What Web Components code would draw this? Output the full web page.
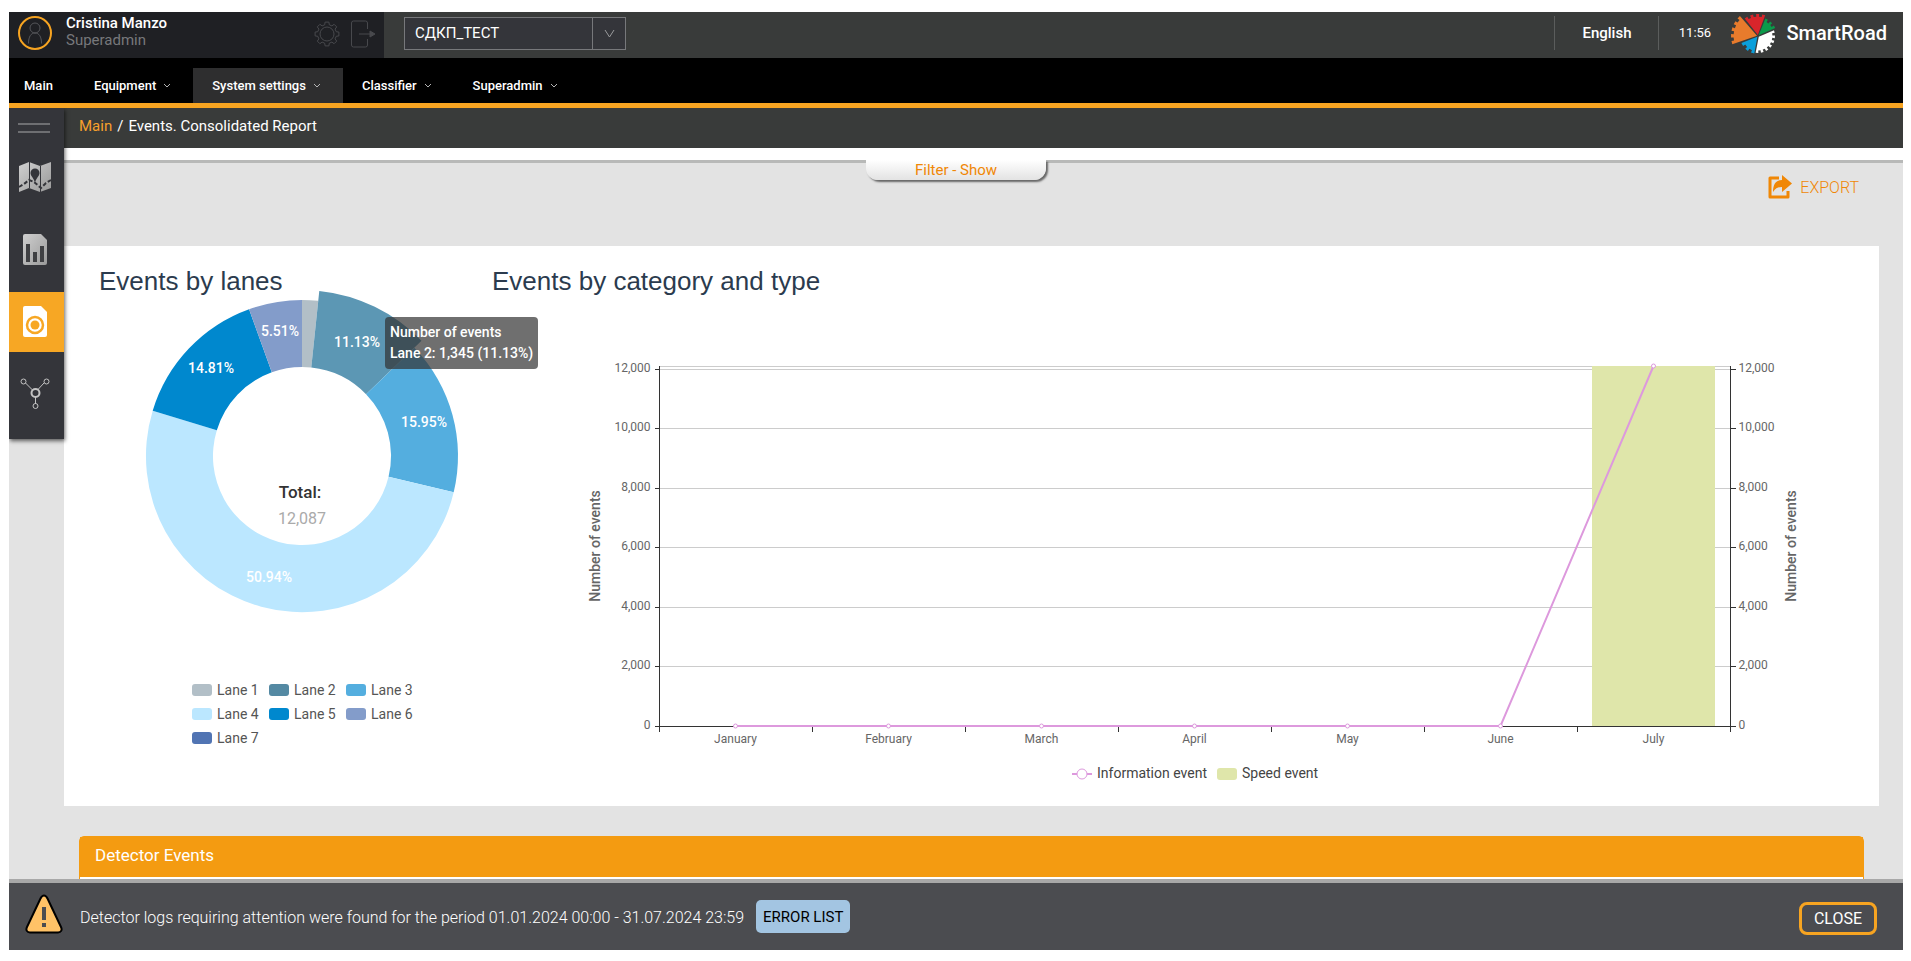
<!DOCTYPE html>
<html lang="en">
<head>
<meta charset="utf-8">
<title>SmartRoad – Events. Consolidated Report</title>
<style>
  html { background: #fff; }
  body { margin: 12px 8px 11px 9px; font-family: Roboto, "Liberation Sans", sans-serif; font-size: 14px; color: #fff; }
</style>
</head>
<body>
<sr-app></sr-app>

<script>
const define = (name, html, setup) => {
  const template = document.createElement('template');
  template.innerHTML = html;
  customElements.define(name, class extends HTMLElement {
    constructor() {
      super();
      this.attachShadow({ mode: 'open' }).append(template.content.cloneNode(true));
    }
    connectedCallback() { if (setup) setup(this, this.shadowRoot); }
  });
};

/* ---------- brand mark: five toothed gear sectors ---------- */
define('sr-logo', `
<style>
  :host { display: block; width: 48px; height: 44px; }
  svg { display: block; overflow: visible; }
</style>
<svg width="48" height="44" viewBox="0 0 48 44" aria-hidden="true"></svg>`, (host, root) => {
  const cx = 28, cy = 23;
  const sector = (from, to, r, teeth, color) => {
    const pt = (deg, rad) => {
      const a = deg * Math.PI / 180;
      return (cx + rad * Math.sin(a)).toFixed(2) + ',' + (cy - rad * Math.cos(a)).toFixed(2);
    };
    const step = (to - from) / (teeth * 2 - 1);
    const pts = [pt((from + to) / 2, 1)];
    for (let i = 0; i < teeth * 2 - 1; i++) {
      const rad = i % 2 ? r - 2.6 : r;
      pts.push(pt(from + i * step, rad), pt(from + (i + 1) * step, rad));
    }
    return `<polygon points="${pts.join(' ')}" fill="${color}"/>`;
  };
  root.querySelector('svg').innerHTML =
    sector(252, 318, 27, 5, '#e87b2c') + sector(-37, 19, 22, 4, '#d9252b') +
    sector(23, 65, 19, 3, '#0b9a4a') + sector(70, 188, 17, 7, '#fff') + sector(192, 247, 18, 3, '#0a9fdb');
});

/* ---------- top bar ---------- */
define('sr-topbar', `
<style>
  :host { display: flex; height: 46px; background: #393b3a; }
  .user { display: flex; width: 375px; box-sizing: border-box; padding: 0 8px 0 9px; background: #1f2024; align-items: center; }
  .avatar { margin-bottom: 4px; }
  .who { flex: 1; margin-left: 14px; padding-bottom: 6px; font-size: 15px; line-height: 17px; }
  .who b { display: block; font-weight: 500; }
  .who span { color: #77787b; }
  .user button { background: none; border: 0; padding: 0; margin: 0 0 2px 10px; display: block; height: 28px; }
  svg { display: block; }
  .pick { position: relative; align-self: center; margin-left: 20px; width: 222px; height: 33px; margin-bottom: 3px; }
  select { appearance: none; width: 100%; height: 100%; box-sizing: border-box; border: 1px solid #77787b; border-radius: 0;
    background: #34353a; color: #fff; font: 15px Roboto, "Liberation Sans", sans-serif; padding: 0 40px 2px 10px; }
  .arrow { position: absolute; right: 0; top: 1px; width: 34px; height: 31px; box-sizing: border-box; border-left: 1px solid #77787b;
    display: grid; place-items: center; pointer-events: none; }
  .right { margin-left: auto; display: flex; align-items: center; }
  .lang { border: solid #5b5d5c; border-width: 0 1px; height: 34px; width: 105px; box-sizing: border-box; margin-bottom: 4px;
    display: grid; place-items: center; color: #fff; text-decoration: none; font-size: 15px; font-weight: 500; }
  time { font-size: 13px; width: 71px; text-align: center; padding-bottom: 5px; box-sizing: border-box; }
  .brand { font-size: 20px; font-weight: 500; margin: 0 16px 4px 8px; }
</style>
<div class="user">
  <svg class="avatar" width="34" height="34" viewBox="0 0 34 34" aria-hidden="true">
    <circle cx="17" cy="17" r="16" fill="none" stroke="#f7a421" stroke-width="2"/>
    <g fill="none" stroke="#55565a"><circle cx="17" cy="12" r="5"/><path d="M10.500 27.500c0-7 2.500-10.500 6.500-10.500s6.500 3.500 6.500 10.500"/></g>
  </svg>
  <div class="who"><b>Cristina Manzo</b><span>Superadmin</span></div>
  <button type="button" aria-label="Settings"><svg width="26" height="26" viewBox="-13 -13 26 26" fill="none" stroke="#48494d"><circle r="7"/><path id="gear"/></svg></button>
  <button type="button" aria-label="Log out"><svg width="26" height="28" viewBox="0 0 26 28" fill="none" stroke="#48494d"><path d="M17.500 9V3a2 2 0 0 0-2-2h-12a2 2 0 0 0-2 2v22a2 2 0 0 0 2 2h12a2 2 0 0 0 2-2v-6M9 14h12"/><path d="M20 11l5 3-5 3z" fill="#48494d"/></svg></button>
</div>
<div class="pick">
  <select aria-label="Project"><option>СДКП_ТЕСТ</option></select>
  <span class="arrow"><svg width="11" height="9" viewBox="0 0 11 9" fill="none" stroke="#9a9b9d"><path d="M1 1l4.500 7L10 1"/></svg></span>
</div>
<div class="right">
  <a class="lang" href="#">English</a>
  <time>11:56</time>
  <sr-logo></sr-logo>
  <span class="brand">SmartRoad</span>
</div>`, (host, root) => {
  const pts = [];
  for (let i = 0; i < 8; i++) {
    const c = i * 45;
    [[-14, 9.5], [-9, 12], [9, 12], [14, 9.5]].forEach(([d, r]) => {
      const a = (c + d) * Math.PI / 180;
      pts.push((r * Math.sin(a)).toFixed(1) + ' ' + (-r * Math.cos(a)).toFixed(1));
    });
  }
  root.getElementById('gear').setAttribute('d', 'M' + pts.join('L') + 'Z');
});

/* ---------- main navigation ---------- */
define('sr-nav-item', `
<style>
  :host { display: block; }
  a { display: flex; align-items: center; height: 35px; padding: 0 22px 0 19px; color: #fff; text-decoration: none; font-size: 13px; font-weight: 500; }
  :host([active]) a { background: #2e2e2f; }
  svg { margin-left: 7px; }
  :host([plain]) svg { display: none; }
  :host([plain]) a { padding: 0 22px 0 15px; }
</style>
<a href="#"><slot></slot><svg width="8" height="6" viewBox="0 0 8 6" fill="none" stroke="#b5b5b5"><path d="M1 1l3 3 3-3"/></svg></a>`);

define('sr-nav', `
<style>
  :host { display: block; background: #000; border-bottom: 5px solid #f7a421; padding-top: 10px; }
  nav { display: flex; }
</style>
<nav>
  <sr-nav-item plain>Main</sr-nav-item>
  <sr-nav-item>Equipment</sr-nav-item>
  <sr-nav-item active>System settings</sr-nav-item>
  <sr-nav-item>Classifier</sr-nav-item>
  <sr-nav-item>Superadmin</sr-nav-item>
</nav>`);

/* ---------- sidebar ---------- */
define('sr-sidebar', `
<style>
  :host { display: block; background: #34353a; width: 55px; padding-bottom: 15px; box-shadow: 1px 2px 4px rgba(0,0,0,.6); }
  button { display: block; border: 0; background: none; padding: 0 0 0 9px; width: 100%; }
  .burger { height: 40px; }
  .item { box-sizing: border-box; height: 60px; margin-bottom: 12px; padding-bottom: 2px; }
  .item:last-child { margin-bottom: 0; }
  .item.on { background: #f7a724; }
  svg { display: block; }
</style>
<button type="button" class="burger" aria-label="Menu"><svg width="34" height="10"><path d="M0 0h32v2H0zM0 8h32v2H0z" fill="#6e6f72"/></svg></button>
<button type="button" class="item" aria-label="Map"><svg width="34" height="40" viewBox="0 -4 34 40">
  <defs><linearGradient id="g" x1="0" y1="0" x2="1" y2="1"><stop stop-color="#d0d0d0"/><stop offset="1" stop-color="#999"/></linearGradient></defs>
  <path d="M1 5L11 1l11 4L33 1v26l-11 4-11-4L1 31z" fill="url(#g)"/>
  <path d="M11.500 1v26M22.500 5v26" stroke="#34353a"/>
  <path d="M17 22c-1-5-4.500-7-4.500-10a4.500 4.500 0 0 1 9 0c0 3-3.500 5-4.500 10z" fill="#34353a"/>
  <path d="M1 26l5-3 5-4 5 2 7 6 5-5 5-3" fill="none" stroke="#34353a" stroke-width="2" stroke-dasharray="4 2"/></svg></button>
<button type="button" class="item" aria-label="Reports"><svg width="34" height="32" viewBox="0 0 34 32">
  <defs><linearGradient id="d" x1="0" y1="0" x2="1" y2="1"><stop stop-color="#cfcfcf"/><stop offset="1" stop-color="#9a9a9a"/></linearGradient></defs>
  <path d="M7 1h16l6 6v23a2 2 0 0 1-2 2H7a2 2 0 0 1-2-2V3a2 2 0 0 1 2-2z" fill="url(#d)"/>
  <path d="M8 11h4v18H8zM15 19h4v10h-4zM22 13h4v16h-4z" fill="#3f4043"/></svg></button>
<button type="button" class="item on" aria-label="Events"><svg width="34" height="32" viewBox="0 0 34 32">
  <path d="M7 1h16l6 6v23a2 2 0 0 1-2 2H7a2 2 0 0 1-2-2V3a2 2 0 0 1 2-2z" fill="#fff"/>
  <circle cx="17" cy="20" r="8" fill="none" stroke="#f7a724" stroke-width="2.500"/><circle cx="17" cy="20" r="4.500" fill="#f7a724"/></svg></button>
<button type="button" class="item" aria-label="Network"><svg width="34" height="32" viewBox="0 0 34 32" fill="none" stroke="#c4c4c4">
  <path d="M7.500 6l7 7M26 6l-6.500 7M17.500 19.500v7.500"/><circle cx="17.500" cy="16" r="4" stroke-width="2"/>
  <circle cx="5.500" cy="4.500" r="2.500"/><circle cx="28.500" cy="4.500" r="2.500"/><circle cx="17.500" cy="29" r="2.500"/></svg></button>`);

/* ---------- donut chart ---------- */
define('sr-donut', `
<style>
  :host { display: block; position: relative; }
  svg { display: block; overflow: visible; width: 100%; height: 382px; }
  text { text-anchor: middle; }
  .pct { font-size: 14px; font-weight: 500; fill: #fff; }
  ul { list-style: none; margin: 0 0 0 94px; padding: 0; display: grid; grid-template-columns: repeat(3, 77px); color: #555; font-size: 14px; line-height: 24px; }
  li { display: flex; align-items: center; }
  i { width: 20px; height: 12px; border-radius: 3px; margin-right: 5px; }
  .tip { position: absolute; left: 287px; top: 21px; background: rgba(50,50,50,.7); border-radius: 4px; padding: 5px; line-height: 21px;
    font-size: 14px; font-weight: 500; color: #fff; white-space: nowrap; }
</style>
<svg role="img" aria-label="Events by lanes"></svg>
<ul></ul>
<div class="tip">Number of events<br>Lane 2: 1,345 (11.13%)</div>`, (host, root) => {
  const lanes = [
    ['Lane 1', 1.66, '#b2bfc7'], ['Lane 2', 11.13, '#5489a3', '#5c97b4'], ['Lane 3', 15.95, '#54aedf'],
    ['Lane 4', 50.94, '#bbe7ff'], ['Lane 5', 14.81, '#0088ce'], ['Lane 6', 5.51, '#839cca'], ['Lane 7', 0, '#5174b3']];
  const cx = 204, cy = 160, inner = 89;
  const at = (share, r) => {
    const a = share / 100 * 2 * Math.PI;
    return [cx + r * Math.sin(a), cy - r * Math.cos(a)].map(v => v.toFixed(2));
  };
  let start = 0, arcs = '', labels = '';
  for (const [, share, color, hover] of lanes) {
    if (!share) continue;
    const outer = hover ? 166 : 156, end = start + share, big = share > 50 ? 1 : 0;
    arcs += `<path fill="${hover || color}" d="M${at(start, outer)}A${outer} ${outer} 0 ${big} 1 ${at(end, outer)}L${at(end, inner)}A${inner} ${inner} 0 ${big} 0 ${at(start, inner)}Z"/>`;
    if (share > 5) {
      const [x, y] = at((start + end) / 2, 126);
      labels += `<text class="pct" x="${Math.round(x)}" y="${Math.round(y) + 4}">${share.toFixed(2)}%</text>`;
    }
    start = end;
  }
  root.querySelector('svg').innerHTML = arcs + labels +
    `<text x="202" y="202" font-size="17" font-weight="500" fill="#333">Total:</text>
     <text x="204" y="228" font-size="16" fill="#aaa">12,087</text>`;
  root.querySelector('ul').innerHTML = lanes.map(l => `<li><i style="background:${l[2]}"></i>${l[0]}</li>`).join('');
});

/* ---------- line and bar chart, redrawn to the available width ---------- */
define('sr-events-chart', `
<style>
  :host { display: block; height: 510px; min-width: 0; }
  svg { display: block; width: 100%; height: 100%; }
  .grid { stroke: #ccc; } .axis { stroke: #333; }
  .grid, .axis { fill: none; }
  .grid, .axis, .bar { shape-rendering: crispEdges; }
  .v { fill: #666; font-size: 12px; } .mid { text-anchor: middle; } .end { text-anchor: end; }
  .name { font-size: 14px; font-weight: 500; fill: #666; text-anchor: middle; }
  .leg { font-size: 14px; fill: #444; }
</style>
<svg role="img" aria-label="Events by category and type"></svg>`, (host, root) => {
  const svg = root.querySelector('svg');
  const months = ['January', 'February', 'March', 'April', 'May', 'June', 'July'];
  const info = [0, 0, 0, 0, 0, 0, 12087];
  const draw = () => {
    const w = host.clientWidth, left = 168.5, right = w - 148.5, top = 70.5, bottom = 430.5;
    const step = (right - left) / 7;
    const y = v => Math.floor(bottom - v / 12087 * (bottom - top)) + .5;
    const x = i => left - .5 + step * (i + .5);
    let s = `<path class="grid" d="M${left} ${top}H${right}"/>`;
    for (let v = 2000; v <= 12000; v += 2000) s += `<path class="grid" d="M${left} ${y(v)}H${right}"/>`;
    for (let v = 0; v <= 12000; v += 2000) {
      const t = v.toLocaleString('en-US');
      s += `<path class="axis" d="M${left - 5} ${y(v)}h5M${right} ${y(v)}h5"/>` +
           `<text class="v end" x="${left - 9}" y="${y(v) + 2}">${t}</text><text class="v" x="${right + 8}" y="${y(v) + 2}">${t}</text>`;
    }
    s += `<path class="axis" d="M${left} ${top - 1}V${bottom}H${right}V${top - 1}"/>`;
    for (let i = 0; i <= 7; i++) s += `<path class="axis" d="M${Math.floor(left + step * i) + .5} ${bottom}v5"/>`;
    s += `<rect class="bar" x="${x(6) - step * .4}" y="${top - .5}" width="${step * .8}" height="${bottom - top}" fill="#dfe6aa"/>`;
    s += `<polyline fill="none" stroke="#dd99dd" stroke-width="2" points="${info.map((v, i) => x(i) + ',' + (bottom - .5 - v / 12087 * (bottom - top))).join(' ')}"/>`;
    months.forEach((m, i) => {
      s += `<circle cx="${x(i)}" cy="${bottom - .5 - info[i] / 12087 * (bottom - top)}" r="2" fill="#fff" stroke="#dd99dd"/>` +
           `<text class="v mid" x="${x(i)}" y="${bottom + 16}">${m}</text>`;
    });
    s += `<text class="name" transform="translate(109 250) rotate(-90)">Number of events</text>` +
         `<text class="name" transform="translate(${right + 65} 250) rotate(-90)">Number of events</text>`;
    const l = Math.round(w / 2) - 113;
    s += `<path d="M${l} 478h20" stroke="#dd99dd" stroke-width="2"/><circle cx="${l + 10}" cy="478" r="5" fill="#fff" stroke="#dd99dd"/>` +
         `<text class="leg" x="${l + 25}" y="482">Information event</text>` +
         `<rect x="${l + 145}" y="472" width="20" height="12" rx="3" fill="#dfe6aa"/><text class="leg" x="${l + 170}" y="482">Speed event</text>`;
    svg.innerHTML = s;
  };
  draw();
  addEventListener('resize', draw);
});

/* ---------- filter strip ---------- */
define('sr-filter-bar', `
<style>
  :host { display: grid; grid-template-columns: 1fr 180px 1fr; align-items: start; height: 83px; padding-right: 55px;
    background: #e3e3e3; border-top: 3px solid #b8b9b8; }
  button { font: 16px Roboto, "Liberation Sans", sans-serif; color: #f08705; border: 0; padding: 0; }
  .tab { grid-column: 2; height: 20px; margin-top: -3px; border-radius: 0 0 12px 12px; background: linear-gradient(#fff, #e3e3e3);
    box-shadow: 2px 2px 2px rgba(0,0,0,.55); font-size: 15px; }
  .export { justify-self: end; display: flex; align-items: center; gap: 8px; margin: 12px -11px 0 0; background: none; font-weight: 300; }
  svg { display: block; }
</style>
<button type="button" class="tab">Filter - Show</button>
<button type="button" class="export"><svg width="24" height="24" viewBox="0 0 24 24" aria-hidden="true">
  <path d="M11 3H2v19h18v-6" fill="none" stroke="#f08705" stroke-width="3" stroke-linejoin="round"/>
  <path d="M14 0l10 8.500L14 17v-5c-4 0-6 1-9 5C5 9 8 5 14 5z" fill="#f08705"/></svg>EXPORT</button>`);

/* ---------- alert bar ---------- */
define('sr-alert', `
<style>
  :host { display: flex; align-items: center; height: 67px; background: #4b4c50; border-top: 4px solid #a8a8a8; padding: 0 26px 0 16px; font-size: 16px; font-weight: 300; }
  p { margin: 2px 12px 0 17px; }
  svg { display: block; margin-bottom: 6px; }
  button { box-sizing: border-box; height: 33px; font: 16px Roboto, "Liberation Sans", sans-serif; }
  .list { background: #a3c5e2; border: 0; border-radius: 5px; padding: 0 7px; color: #000; font-size: 15px; }
  .close { margin-left: auto; width: 78px; margin-top: 4px; border: 3px solid #f7a421; border-radius: 8px; background: none; color: #fff; padding: 0; }
</style>
<svg width="38" height="40" viewBox="0 0 38 40" aria-hidden="true">
  <path d="M19 1.500c1.500 0 2.500 1 3.500 3L36 33c1.500 3 0 5.500-3 5.500H5c-3 0-4.500-2.500-3-5.500L15.500 4.500c1-2 2-3 3.500-3z" fill="#ffc267" stroke="#000" stroke-width="2"/>
  <path d="M17 13h4v13h-4zM17 29h4v4h-4z" fill="#4b4c50"/></svg>
<p>Detector logs requiring attention were found for the period 01.01.2024 00:00 - 31.07.2024 23:59</p>
<button type="button" class="list">ERROR LIST</button>
<button type="button" class="close">CLOSE</button>`);

/* ---------- page shell ---------- */
define('sr-app', `
<style>
  :host { display: flex; flex-direction: column; height: calc(100vh - 23px); min-height: 500px; }
  .work { flex: 1; min-height: 0; display: flex; align-items: flex-start; background: #e3e3e3; overflow: hidden; }
  sr-sidebar { position: relative; z-index: 1; flex: none; }
  main { flex: 1; min-width: 0; }
  .crumbs { background: #393b3a; border-bottom: 12px solid #fff; height: 40px; padding: 0 15px; font-size: 15px; line-height: 36px; }
  .crumbs a { color: #f7a02c; text-decoration: none; }
  .crumbs span { margin: 0 5px; }
  .panel { background: #fff; margin-right: 24px; padding: 20px 0 0 34px; display: grid; grid-template-columns: 393px 1fr; }
  h2 { margin: 0; padding-left: 1px; font: 26px/30px "Liberation Sans", Arial, sans-serif; color: #2b3b4e; }
  .detector { margin: 30px 39px 0 15px; background: #fff; border: 1px solid #f49b11; border-radius: 5px; height: 200px; }
  h3 { margin: 0; padding: 0 15px; background: #f49b11; font-size: 17px; font-weight: 400; line-height: 36px; height: 40px; }
</style>
<sr-topbar></sr-topbar>
<sr-nav></sr-nav>
<div class="work">
  <sr-sidebar></sr-sidebar>
  <main>
    <div class="crumbs"><a href="#">Main</a><span>/</span>Events. Consolidated Report</div>
    <sr-filter-bar></sr-filter-bar>
    <section class="panel">
      <div><h2>Events by lanes</h2><sr-donut></sr-donut></div>
      <div><h2>Events by category and type</h2><sr-events-chart></sr-events-chart></div>
    </section>
    <section class="detector"><h3>Detector Events</h3></section>
  </main>
</div>
<sr-alert></sr-alert>`);
</script>
</body>
</html>
